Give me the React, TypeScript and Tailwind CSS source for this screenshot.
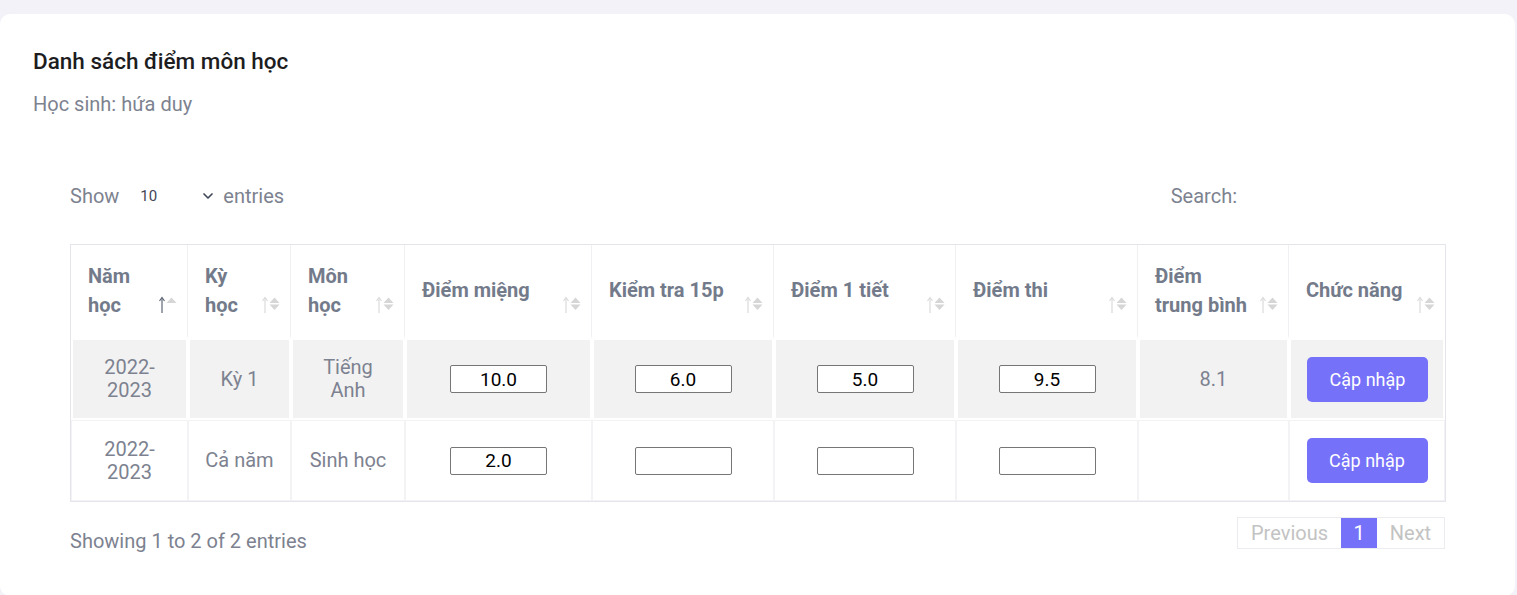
import { ChevronDown } from "lucide-react";

type Row = {
  year: string;
  term: string;
  subject: string;
  scores: string[];
  avg: string;
};

const rows: Row[] = [
  { year: "2022-2023", term: "Kỳ 1", subject: "Tiếng Anh", scores: ["10.0", "6.0", "5.0", "9.5"], avg: "8.1" },
  { year: "2022-2023", term: "Cả năm", subject: "Sinh học", scores: ["2.0", "", "", ""], avg: "" },
];

const headers = [
  "Năm học",
  "Kỳ học",
  "Môn học",
  "Điểm miệng",
  "Kiểm tra 15p",
  "Điểm 1 tiết",
  "Điểm thi",
  "Điểm trung bình",
  "Chức năng",
];

const widths = ["117px", "103px", "114px", "187px", "182px", "182px", "182px", "151px", "156px"];

function SortIcon({ active }: { active?: boolean }) {
  return (
    <svg width="20" height="18" viewBox="0 0 20 18" className="absolute right-[9px] top-[51px]">
      {/* thin arrow */}
      <line x1="4" y1="2" x2="4" y2="17" stroke={active ? "#5f6675" : "#dadada"} strokeWidth="1.2" />
      <path d="M1.5 5 L4 1.5 L6.5 5" fill="none" stroke={active ? "#5f6675" : "#dadada"} strokeWidth="1.2" />
      {/* triangles */}
      <path d="M8.5 7 L13.5 1.5 L18.5 7 Z" fill="#d6d6d6" />
      {!active && <path d="M8.5 8.5 L18.5 8.5 L13.5 14 Z" fill="#d6d6d6" />}
    </svg>
  );
}

export default function App() {
  return (
    <div className="min-h-screen bg-[#f2f2f8] pt-[14px] pr-[2px] font-['Roboto','Noto_Sans',sans-serif]">
      <div className="bg-white rounded-[10px] pt-[33px] px-[33px] pb-[43px]">
        <h4 className="text-[22.5px] leading-[28px] font-medium text-[#1d1d1f]">Danh sách điểm môn học</h4>
        <p className="mt-[16px] text-[20px] leading-[26px] text-[#7d8290]">Học sinh: hứa duy</p>

        <div className="mx-[37px] mt-[64px]">
          {/* Length + search */}
          <div className="flex items-center justify-between h-[30px] text-[20px] text-[#7d8290]">
            <div className="flex items-center">
              <span>Show</span>
              <div className="flex items-center w-[100px] pl-[21px] pr-[3px]">
                <span className="text-[15px] text-[#3f4656]">10</span>
                <ChevronDown className="ml-auto w-[16px] h-[16px] text-[#3f4656]" strokeWidth={2.5} />
              </div>
              <span className="ml-[4px]">entries</span>
            </div>
            <div className="flex items-center">
              <span>Search:</span>
              <input className="ml-[8px] w-[200px] h-[30px] outline-none bg-transparent" />
            </div>
          </div>

          {/* Table */}
          <table className="mt-[33px] w-full table-fixed border-separate border-spacing-0 border border-[#e4e4ea]">
            <colgroup>
              {widths.map((w, i) => (
                <col key={i} style={{ width: w }} />
              ))}
            </colgroup>
            <thead>
              <tr className="h-[93px]">
                {headers.map((h, i) => (
                  <th
                    key={h}
                    className={`relative text-left align-middle pl-[17px] pr-[36px] text-[20px] leading-[29px] font-bold text-[#737b8b] border-b-2 border-white ${i < headers.length - 1 ? "border-r border-r-[#f0f0f2]" : ""}`}
                  >
                    {h}
                    <SortIcon active={i === 0} />
                  </th>
                ))}
              </tr>
            </thead>
            <tbody className="text-[20px] leading-[23px] text-[#7d8290]">
              {rows.map((r, ri) => {
                const cell =
                  ri === 0
                    ? "bg-[#f2f2f2] border-2 border-white text-center align-middle px-[16px]"
                    : "bg-white border border-[#f3f3f5] text-center align-middle px-[16px]";
                return (
                  <tr key={ri} className={ri === 0 ? "h-[82px]" : "h-[81px]"}>
                    <td className={cell}>{r.year}</td>
                    <td className={cell}>{r.term}</td>
                    <td className={cell}>{r.subject}</td>
                    {r.scores.map((s, si) => (
                      <td key={si} className={cell}>
                        <input
                          defaultValue={s}
                          className="w-[97px] h-[28px] border border-[#767676] rounded-[2px] bg-white text-center text-[19px] text-black outline-none"
                        />
                      </td>
                    ))}
                    <td className={cell}>{r.avg}</td>
                    <td className={`${cell} px-0`}>
                      <button className="w-[121px] h-[45px] rounded-[5px] bg-[#7571f9] text-white text-[18px]">
                        Cập nhập
                      </button>
                    </td>
                  </tr>
                );
              })}
            </tbody>
          </table>

          {/* Footer */}
          <div className="mt-[15px] flex items-start justify-between">
            <div className="pt-[12px] text-[20px] leading-[24px] text-[#7d8290]">Showing 1 to 2 of 2 entries</div>
            <div className="flex h-[32px] border border-[#ececf0] text-[20px] text-[#c3c3c3]">
              <span className="w-[103px] flex items-center justify-center">Previous</span>
              <span className="w-[36px] flex items-center justify-center bg-[#7571f9] text-white">1</span>
              <span className="w-[67px] flex items-center justify-center">Next</span>
            </div>
          </div>
        </div>
      </div>
    </div>
  );
}
